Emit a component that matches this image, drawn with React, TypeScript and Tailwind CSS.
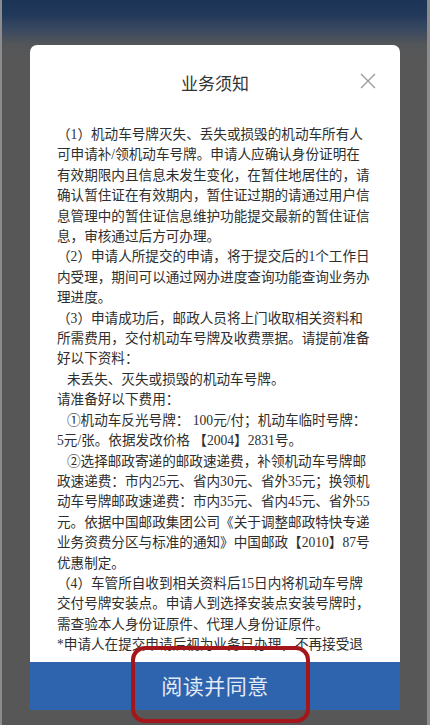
import React from "react";

const lines: { t: string; indent?: boolean }[] = [
  { t: "（1）机动车号牌灭失、丢失或损毁的机动车所有人" },
  { t: "可申请补/领机动车号牌。申请人应确认身份证明在" },
  { t: "有效期限内且信息未发生变化，在暂住地居住的，请" },
  { t: "确认暂住证在有效期内，暂住证过期的请通过用户信" },
  { t: "息管理中的暂住证信息维护功能提交最新的暂住证信" },
  { t: "息，审核通过后方可办理。" },
  { t: "（2）申请人所提交的申请，将于提交后的1个工作日" },
  { t: "内受理，期间可以通过网办进度查询功能查询业务办" },
  { t: "理进度。" },
  { t: "（3）申请成功后，邮政人员将上门收取相关资料和" },
  { t: "所需费用，交付机动车号牌及收费票据。请提前准备" },
  { t: "好以下资料：" },
  { t: "未丢失、灭失或损毁的机动车号牌。", indent: true },
  { t: "请准备好以下费用：" },
  { t: "①机动车反光号牌： 100元/付；机动车临时号牌：", indent: true },
  { t: "5元/张。依据发改价格 【2004】2831号。" },
  { t: "②选择邮政寄递的邮政速递费，补领机动车号牌邮", indent: true },
  { t: "政速递费：市内25元、省内30元、省外35元；换领机" },
  { t: "动车号牌邮政速递费：市内35元、省内45元、省外55" },
  { t: "元。依据中国邮政集团公司《关于调整邮政特快专递" },
  { t: "业务资费分区与标准的通知》中国邮政【2010】87号" },
  { t: "优惠制定。" },
  { t: "（4）车管所自收到相关资料后15日内将机动车号牌" },
  { t: "交付号牌安装点。申请人到选择安装点安装号牌时，" },
  { t: "需查验本人身份证原件、代理人身份证原件。" },
  { t: "*申请人在提交申请后视为业务已办理，不再接受退" },
];

export default function App() {
  return (
    <div className="relative w-[430px] h-[725px] overflow-hidden bg-[linear-gradient(180deg,#1b3456_0px,#213859_14px,#3a4960_30px,#535659_44px,#575757_60px,#575757_100%)] border-l-[2px] border-r-[3px] border-[#8c8c8c] flex flex-col">
      <div className="h-[45px] shrink-0" />
      <div className="ml-[28px] w-[370px] flex-1 flex flex-col bg-white rounded-t-[7px] overflow-hidden">
        <div className="relative h-[75px] shrink-0 flex items-center justify-center">
          <span className="text-[17px] text-[#333] font-['Noto_Sans_CJK_SC',sans-serif]">业务须知</span>
          <svg className="absolute left-[330px] top-[28px]" width="16" height="16" viewBox="0 0 16 16">
            <path d="M1 1 L15 15 M15 1 L1 15" stroke="#9a9a9a" strokeWidth="1.4" fill="none" />
          </svg>
        </div>
        <div className="flex-1 overflow-hidden pl-[27px] pr-[28px] pt-[5px]">
          <div className="text-[13.6px] leading-[20.4px] text-[#2e2e2e] font-['Liberation_Serif','Noto_Sans_CJK_SC',serif]">
            {lines.map((l, i) => (
              <div key={i} className={"whitespace-nowrap " + (l.indent ? "pl-[10px]" : "")}>
                {l.t}
              </div>
            ))}
          </div>
        </div>
        <div className="h-[48px] shrink-0 bg-[#2e63ad] flex items-center justify-center">
          <span className="text-[21px] text-[#e3ebf6] font-['Noto_Sans_CJK_SC',sans-serif] tracking-[0.5px]">阅读并同意</span>
        </div>
      </div>
      <div className="h-[15px] shrink-0" />
      <div className="absolute left-[129px] top-[646px] w-[179px] h-[77px] border-[4px] border-[#a5161b] rounded-[14px]" />
    </div>
  );
}
